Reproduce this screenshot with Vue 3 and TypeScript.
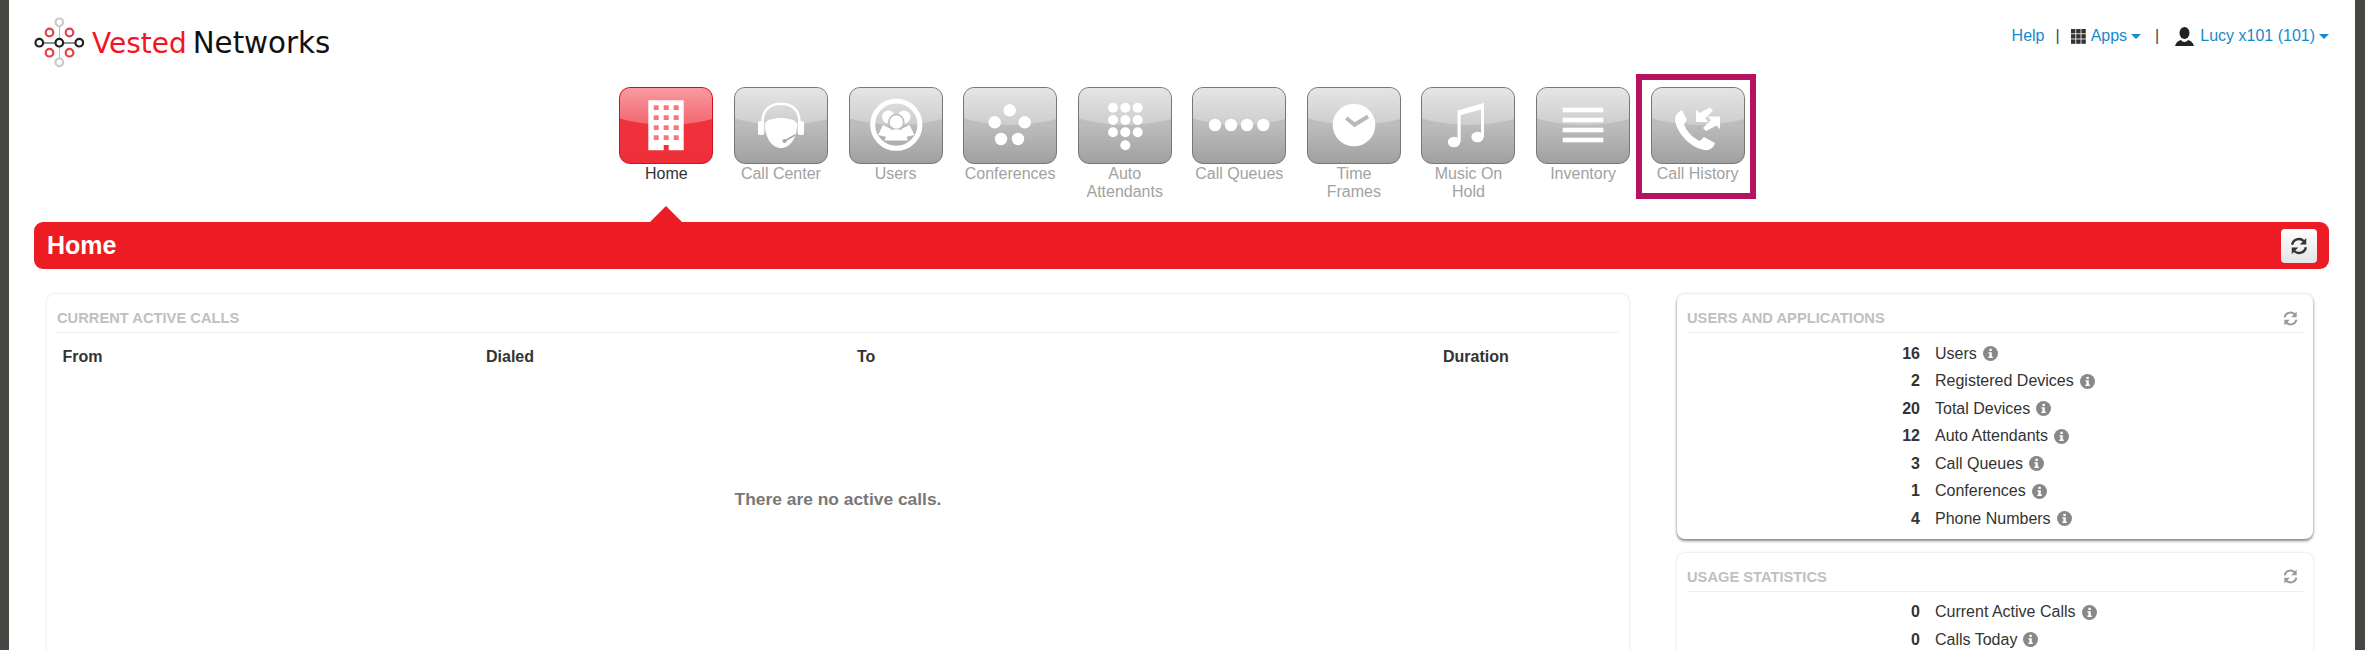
<template>
  <div class="page">
    <header class="top">
      <div class="logo">
        <svg class="logo-mark" width="52" height="52" viewBox="0 0 52 52">
          <line x1="5" y1="26" x2="46" y2="26" stroke="#222" stroke-width="1" />
          <line x1="25.5" y1="5" x2="25.5" y2="46" stroke="#bbb" stroke-width="1" />
          <circle v-for="c in logoDots" :key="c.x + '-' + c.y" :cx="c.x" :cy="c.y" r="3.8" fill="#fff" :stroke="c.color" stroke-width="2.2" />
        </svg>
        <span class="logo-text"><span class="red">Vested</span> <span class="dark">Networks</span></span>
      </div>
      <div class="links">
        <a class="help">Help</a>
        <span class="sep">|</span>
        <svg class="grid-icon" width="15" height="15" viewBox="0 0 15 15">
          <template v-for="i in 3" :key="i">
            <rect v-for="j in 3" :key="j" :x="(i - 1) * 5.2" :y="(j - 1) * 5.2" width="4.4" height="4.4" fill="#333" />
          </template>
        </svg>
        <a class="apps">Apps</a><i class="caret"></i>
        <span class="sep sep2">|</span>
        <svg class="person" width="19" height="19" viewBox="0 0 19 19">
          <ellipse cx="9.5" cy="6" rx="5" ry="6" fill="#222" />
          <path d="M0 19C1 15.5 3 14 6 13C7.5 15.5 11.5 15.5 13 13C16 14 18 15.5 19 19Z" fill="#222" />
        </svg>
        <a class="user">Lucy x101 (101)</a><i class="caret"></i>
      </div>
    </header>

    <nav class="nav">
      <div v-for="item in navItems" :key="item.icon" class="nav-item" :class="{ active: item.icon === 'home' }">
        <div class="tile">
          <svg class="tile-icon" width="94" height="76" viewBox="0 0 94 76">
            <g v-if="item.icon === 'home'">
              <path d="M29.3 13.3H64.7V63.3H49.7V58H44.7V63.3H29.3Z" fill="#fff" />
              <template v-for="y in [18.3, 28.3, 38.3, 48.3]" :key="y">
                <rect v-for="x in [34.7, 44.7, 54.7]" :key="x" :x="x" :y="y" width="5" height="4.7" fill="#f8757e" />
              </template>
            </g>
            <g v-else-if="item.icon === 'center'" fill="#fff">
              <path d="M28.5 35C28.5 22 37 16.8 47 16.8S65.5 22 65.5 35" fill="none" stroke="#fff" stroke-width="2.4" />
              <path d="M31 38C31 33 39 31 47 31S63 33 63 38C63 51 56 61 47 61S31 51 31 38Z" />
              <rect x="24" y="34" width="6.4" height="14" rx="2" />
              <rect x="63.6" y="34" width="6.4" height="14" rx="2" />
              <path d="M51 54L61 48" stroke="#a8a8a8" stroke-width="1.5" />
              <circle cx="50.5" cy="54" r="2.1" fill="#a8a8a8" />
            </g>
            <g v-else-if="item.icon === 'users'">
              <circle cx="47.3" cy="37.7" r="23.6" fill="none" stroke="#fff" stroke-width="5" />
              <circle cx="39.5" cy="30" r="6.5" fill="#fff" />
              <circle cx="55" cy="30" r="6.5" fill="#fff" />
              <path d="M29 48L34 38L42 42L38 50ZM65.5 48L60.5 38L52.5 42L56.5 50Z" fill="#fff" />
              <circle cx="47.3" cy="35" r="7.5" fill="#fff" stroke="#bcbcbc" stroke-width="1.5" />
              <path d="M35.5 53.5L39.5 43.5L44 42.5H50.5L55 43.5L59 53.5Z" fill="#fff" />
            </g>
            <g v-else-if="item.icon === 'conf'" fill="#fff">
              <circle v-for="d in confDots" :key="d[0] + '-' + d[1]" :cx="d[0]" :cy="d[1]" r="6.2" />
            </g>
            <g v-else-if="item.icon === 'auto'" fill="#fff">
              <template v-for="y in [20.7, 33, 45.3]" :key="y">
                <circle v-for="x in [35, 47.3, 59.7]" :key="x" :cx="x" :cy="y" r="5" />
              </template>
              <circle cx="47.3" cy="58.3" r="5" />
            </g>
            <g v-else-if="item.icon === 'queues'" fill="#fff">
              <circle v-for="x in [23, 39, 55, 71.3]" :key="x" :cx="x" cy="38" r="6.2" />
            </g>
            <g v-else-if="item.icon === 'time'">
              <circle cx="47" cy="38" r="21.3" fill="#fff" />
              <path d="M39.3 31L47.5 37.8L61 29.5" fill="none" stroke="#b9b9b9" stroke-width="4" />
            </g>
            <g v-else-if="item.icon === 'music'" fill="#fff">
              <ellipse cx="33" cy="55" rx="6.2" ry="5.2" />
              <ellipse cx="56.5" cy="50" rx="6.2" ry="5.2" />
              <path d="M36.5 55V23.5L63 16V50H60V22.5L39.7 28V55Z" />
            </g>
            <g v-else-if="item.icon === 'inventory'" fill="#fff">
              <rect v-for="y in [20.7, 30.7, 40.7, 50.7]" :key="y" x="26.7" :y="y" width="40.6" height="4.6" />
            </g>
            <g v-else fill="#fff">
              <path d="M31 23L36 33L33 37C35 44 42 51 49 54L53 50L64 56C63 60 59 64 54 63C40 61 26 47 24 33C24 28 27 25 31 23Z" />
              <path d="M59 20.5L62 23.5L54 31.5L57.5 35H45V22.5L48.5 26Z" />
              <path d="M55 44L52 41L60 33L56.5 29.5H69V42L65.5 38.5Z" />
            </g>
          </svg>
        </div>
        <div class="label">
          <div v-for="line in item.lines" :key="line">{{ line }}</div>
        </div>
        <div v-if="item.icon === 'history'" class="marker"></div>
      </div>
    </nav>

    <div class="title-bar">
      <h1>Home</h1>
      <button class="refresh-btn" type="button">
        <svg width="20" height="20" viewBox="0 0 16 16" class="refresh-icon">
          <path d="M2.5 7A5.5 5.5 0 0 1 11.8 4M13.5 9A5.5 5.5 0 0 1 4.2 12" fill="none" stroke="currentColor" stroke-width="1.9" />
          <path d="M13.8 1.5V6.8H8.6ZM2.2 14.5V9.2H7.4Z" fill="currentColor" />
        </svg>
      </button>
    </div>

    <main class="content">
      <section class="card calls">
        <div class="card-head"><h2>CURRENT ACTIVE CALLS</h2></div>
        <div class="call-cols">
          <span>From</span><span>Dialed</span><span>To</span><span>Duration</span>
        </div>
        <p class="empty">There are no active calls.</p>
      </section>

      <div class="side">
        <section v-for="panel in panels" :key="panel.title" class="card">
          <div class="card-head">
            <h2>{{ panel.title }}</h2>
            <svg width="17" height="17" viewBox="0 0 16 16" class="card-refresh">
              <path d="M2.5 7A5.5 5.5 0 0 1 11.8 4M13.5 9A5.5 5.5 0 0 1 4.2 12" fill="none" stroke="currentColor" stroke-width="1.9" />
              <path d="M13.8 1.5V6.8H8.6ZM2.2 14.5V9.2H7.4Z" fill="currentColor" />
            </svg>
          </div>
          <ul class="stats">
            <li v-for="row in panel.rows" :key="row.name">
              <b>{{ row.value }}</b>
              <span>{{ row.name }}</span>
              <svg class="info" width="15" height="15" viewBox="0 0 15 15">
                <circle cx="7.5" cy="7.5" r="7.5" fill="#888" />
                <rect x="6.4" y="2.8" width="2.4" height="2.2" fill="#fff" />
                <path d="M5.4 6.2H8.8V10.6H9.8V12H5.4V10.6H6.4V7.6H5.4Z" fill="#fff" />
              </svg>
            </li>
          </ul>
        </section>
      </div>
    </main>
  </div>
</template>

<script setup lang="ts">
interface NavItem {
  icon: string
  lines: string[]
}

interface Stat {
  value: number
  name: string
}

const logoDots = [
  { x: 25.3, y: 5.3, color: '#c9c9c9' },
  { x: 25.3, y: 45.3, color: '#c9c9c9' },
  { x: 15.5, y: 15.5, color: '#e8404a' },
  { x: 35.5, y: 15.5, color: '#e8404a' },
  { x: 15.5, y: 35.7, color: '#e8404a' },
  { x: 35.5, y: 35.7, color: '#e8404a' },
  { x: 5.3, y: 25.7, color: '#222' },
  { x: 25.3, y: 25.7, color: '#222' },
  { x: 45.3, y: 25.7, color: '#222' }
]

const confDots = [
  [46.7, 23.3],
  [31.7, 35.3],
  [61.7, 35.3],
  [38, 52],
  [55, 52]
]

const navItems: NavItem[] = [
  { icon: 'home', lines: ['Home'] },
  { icon: 'center', lines: ['Call Center'] },
  { icon: 'users', lines: ['Users'] },
  { icon: 'conf', lines: ['Conferences'] },
  { icon: 'auto', lines: ['Auto', 'Attendants'] },
  { icon: 'queues', lines: ['Call Queues'] },
  { icon: 'time', lines: ['Time', 'Frames'] },
  { icon: 'music', lines: ['Music On', 'Hold'] },
  { icon: 'inventory', lines: ['Inventory'] },
  { icon: 'history', lines: ['Call History'] }
]

const panels: { title: string; rows: Stat[] }[] = [
  {
    title: 'USERS AND APPLICATIONS',
    rows: [
      { value: 16, name: 'Users' },
      { value: 2, name: 'Registered Devices' },
      { value: 20, name: 'Total Devices' },
      { value: 12, name: 'Auto Attendants' },
      { value: 3, name: 'Call Queues' },
      { value: 1, name: 'Conferences' },
      { value: 4, name: 'Phone Numbers' }
    ]
  },
  {
    title: 'USAGE STATISTICS',
    rows: [
      { value: 0, name: 'Current Active Calls' },
      { value: 0, name: 'Calls Today' }
    ]
  }
]
</script>

<style>
html,
body {
  margin: 0;
  background: #fff;
  overflow: hidden;
}
</style>

<style scoped>
.page {
  box-sizing: border-box;
  width: 2365px;
  height: 650px;
  overflow: hidden;
  border-left: 9px solid #454743;
  border-right: 10px solid #454743;
  background: #fff;
  font-family: "Liberation Sans", Arial, sans-serif;
  font-size: 16px;
  color: #333;
}

.top {
  display: flex;
  justify-content: space-between;
  align-items: flex-start;
  height: 87px;
  padding: 17px 26px 0 25px;
  box-sizing: border-box;
}

.logo {
  display: flex;
  align-items: center;
  height: 52px;
}

.logo-mark {
  margin-right: 6px;
}

.logo-text {
  font-family: "DejaVu Sans", sans-serif;
  font-size: 28px;
  word-spacing: -3px;
  white-space: nowrap;
}

.red {
  color: #f5141e;
}

.dark {
  font-size: 29.3px;
  color: #111;
}

.links {
  display: flex;
  align-items: center;
  height: 38px;
  color: #1589cf;
}

.sep {
  margin: 0 11px;
  color: #444;
}

.sep2 {
  margin: 0 16px 0 14px;
}

.grid-icon {
  margin-right: 5px;
}

.person {
  margin-right: 6px;
}

.caret {
  width: 0;
  height: 0;
  margin: 1px 0 0 4px;
  border-left: 5px solid transparent;
  border-right: 5px solid transparent;
  border-top: 5px solid #1589cf;
}

.nav {
  display: flex;
  justify-content: center;
  height: 135px;
}

.nav-item {
  position: relative;
  width: 114.6px;
  text-align: center;
  color: #a2a2a2;
  line-height: 18px;
}

.nav-item.active {
  color: #333;
}

.nav-item.active::after {
  content: "";
  position: absolute;
  left: 41.3px;
  bottom: 0;
  border-left: 16px solid transparent;
  border-right: 16px solid transparent;
  border-bottom: 16px solid #ed1c24;
}

.tile {
  position: relative;
  box-sizing: border-box;
  width: 94px;
  height: 77px;
  margin: 0 auto;
  overflow: hidden;
  border: 1px solid #777;
  border-radius: 11px;
  background: linear-gradient(#c4c4c4, #bcbcbc 50%, #a0a0a0);
}

.tile::before {
  content: "";
  position: absolute;
  left: -47px;
  top: -61px;
  width: 188px;
  height: 98px;
  border-radius: 50%;
  background: linear-gradient(transparent 61%, #e6e6e6 61%, #cdcdcd 100%);
}

.active .tile {
  border-color: #cf111b;
  background: linear-gradient(#ee3540, #ee2f3a);
}

.active .tile::before {
  background: linear-gradient(transparent 61%, #fa9ca2 61%, #f3666f 100%);
}

.tile-icon {
  position: absolute;
  left: -1px;
  top: -1px;
}

.label {
  margin-top: 1px;
  white-space: nowrap;
}

.marker {
  position: absolute;
  left: -4.4px;
  top: -13px;
  box-sizing: border-box;
  width: 120px;
  height: 125px;
  border: 6px solid #b5135f;
}

.title-bar {
  display: flex;
  justify-content: space-between;
  align-items: center;
  box-sizing: border-box;
  height: 47px;
  margin: 0 26px 0 25px;
  padding: 0 12px 0 13px;
  border-radius: 9px;
  background: #ed1c24;
}

h1 {
  margin: 0;
  font-size: 25px;
  font-weight: bold;
  color: #fff;
}

.refresh-btn {
  display: flex;
  align-items: center;
  justify-content: center;
  width: 36px;
  height: 34px;
  padding: 0;
  border: 0;
  border-radius: 4px;
  background: linear-gradient(#fff, #e4e4e4);
  color: #333;
}

.content {
  display: grid;
  grid-template-columns: 1582px 636px;
  gap: 48px;
  padding: 25px 0 0 38px;
}

.card {
  box-sizing: border-box;
  padding: 0 10px 6px;
  border-radius: 8px;
  background: #fff;
  box-shadow: 0 0 3px rgba(0, 0, 0, 0.16);
}

.side .card:first-child {
  box-shadow: 0 0 3px rgba(0, 0, 0, 0.16), 0 2px 3px rgba(0, 0, 0, 0.45);
}

.calls {
  height: 600px;
}

.card-head {
  display: flex;
  justify-content: space-between;
  align-items: center;
  padding: 13px 0 3px;
  border-bottom: 1px solid #eee;
}

h2 {
  margin: 0;
  font-size: 14.7px;
  line-height: 22px;
  font-weight: bold;
  color: #c0c0c0;
}

.card-refresh {
  margin-right: 4px;
  color: #999;
}

.call-cols {
  display: grid;
  grid-template-columns: 423.5px 371px 586px 1fr;
  margin-top: 15px;
  padding-left: 5.5px;
  line-height: 18px;
  font-weight: bold;
  color: #333;
}

.empty {
  margin: 124px 0 0;
  text-align: center;
  font-size: 17.4px;
  line-height: 18px;
  font-weight: bold;
  color: #777;
}

.side {
  display: flex;
  flex-direction: column;
  gap: 14px;
}

.stats {
  margin: 7px 0 0;
  padding: 0;
  list-style: none;
}

.stats li {
  display: flex;
  align-items: center;
  height: 27.5px;
  color: #333;
}

.stats b {
  width: 233px;
  margin-right: 15px;
  text-align: right;
}

.info {
  margin-left: 6px;
}
</style>
